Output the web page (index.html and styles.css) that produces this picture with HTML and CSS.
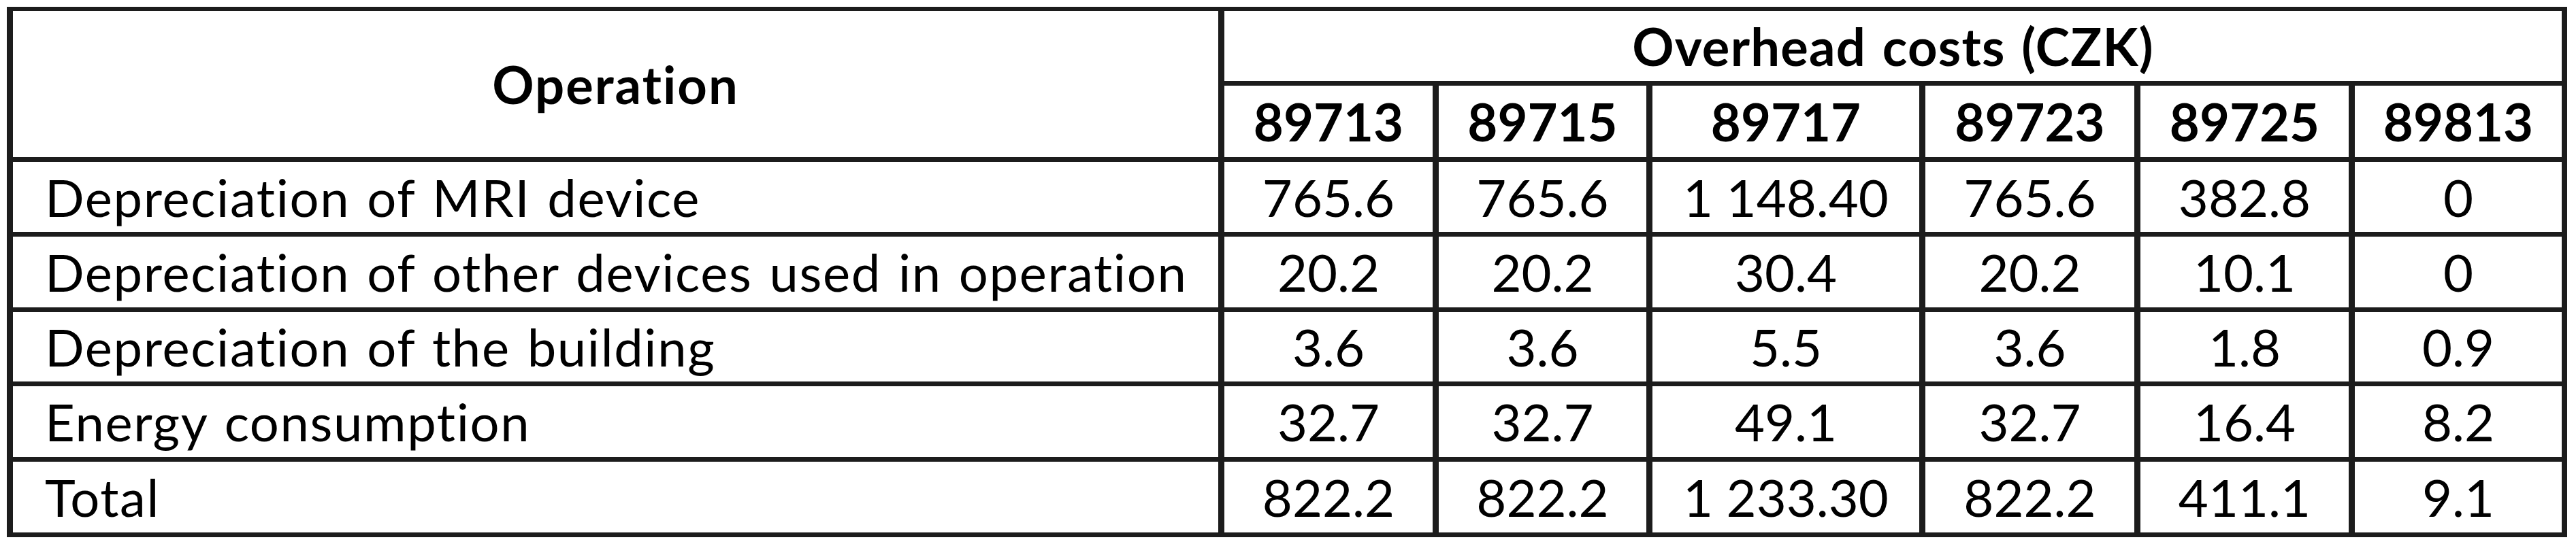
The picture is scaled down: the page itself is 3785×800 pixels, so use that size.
FILE: index.html
```html
<!DOCTYPE html>
<html lang="en">
<head>
<meta charset="utf-8">
<title>Overhead costs</title>
<link rel="stylesheet" href="styles.css">
</head>
<body>
<div class="sheet">
  <div class="cell head op">Operation</div>
  <div class="cell head group">Overhead costs (CZK)</div>
  <div class="cell head">89713</div>
  <div class="cell head">89715</div>
  <div class="cell head">89717</div>
  <div class="cell head">89723</div>
  <div class="cell head">89725</div>
  <div class="cell head">89813</div>

  <div class="cell label">Depreciation of MRI device</div>
  <div class="cell">765.6</div>
  <div class="cell">765.6</div>
  <div class="cell">1 148.40</div>
  <div class="cell">765.6</div>
  <div class="cell">382.8</div>
  <div class="cell">0</div>

  <div class="cell label">Depreciation of other devices used in operation</div>
  <div class="cell">20.2</div>
  <div class="cell">20.2</div>
  <div class="cell">30.4</div>
  <div class="cell">20.2</div>
  <div class="cell">10.1</div>
  <div class="cell">0</div>

  <div class="cell label">Depreciation of the building</div>
  <div class="cell">3.6</div>
  <div class="cell">3.6</div>
  <div class="cell">5.5</div>
  <div class="cell">3.6</div>
  <div class="cell">1.8</div>
  <div class="cell">0.9</div>

  <div class="cell label">Energy consumption</div>
  <div class="cell">32.7</div>
  <div class="cell">32.7</div>
  <div class="cell">49.1</div>
  <div class="cell">32.7</div>
  <div class="cell">16.4</div>
  <div class="cell">8.2</div>

  <div class="cell label">Total</div>
  <div class="cell">822.2</div>
  <div class="cell">822.2</div>
  <div class="cell">1 233.30</div>
  <div class="cell">822.2</div>
  <div class="cell">411.1</div>
  <div class="cell">9.1</div>
</div>
</body>
</html>
```
FILE: styles.css
```css
html, body {
  margin: 0;
  padding: 0;
  background: #ffffff;
}

.sheet {
  display: grid;
  grid-template-columns: 1771px 306px 305px 392px 307px 306px 304px;
  grid-template-rows: 103px 105px 103px 104px 102px 104px 104px;
  column-gap: 9px;
  row-gap: 7px;
  padding: 6px 8px 7px 9px;
  margin: 10px 0 0 10px;
  width: max-content;
  background: #1c1c1c;
}

.cell {
  background: #ffffff;
  display: flex;
  align-items: center;
  justify-content: center;
  font-family: Lato, "Open Sans", sans-serif;
  font-size: 76px;
  line-height: 1.2;
  color: #000000;
  white-space: nowrap;
  font-variant-ligatures: none;
  font-feature-settings: "liga" 0, "dlig" 0;
}

.head {
  font-weight: 700;
}

.op {
  grid-row: span 2;
  letter-spacing: 2px;
}

.group {
  grid-column: span 6;
  letter-spacing: 1.2px;
  word-spacing: 4px;
}

.label {
  justify-content: flex-start;
  padding-left: 47px;
  letter-spacing: 1.6px;
  word-spacing: 4px;
}
```
